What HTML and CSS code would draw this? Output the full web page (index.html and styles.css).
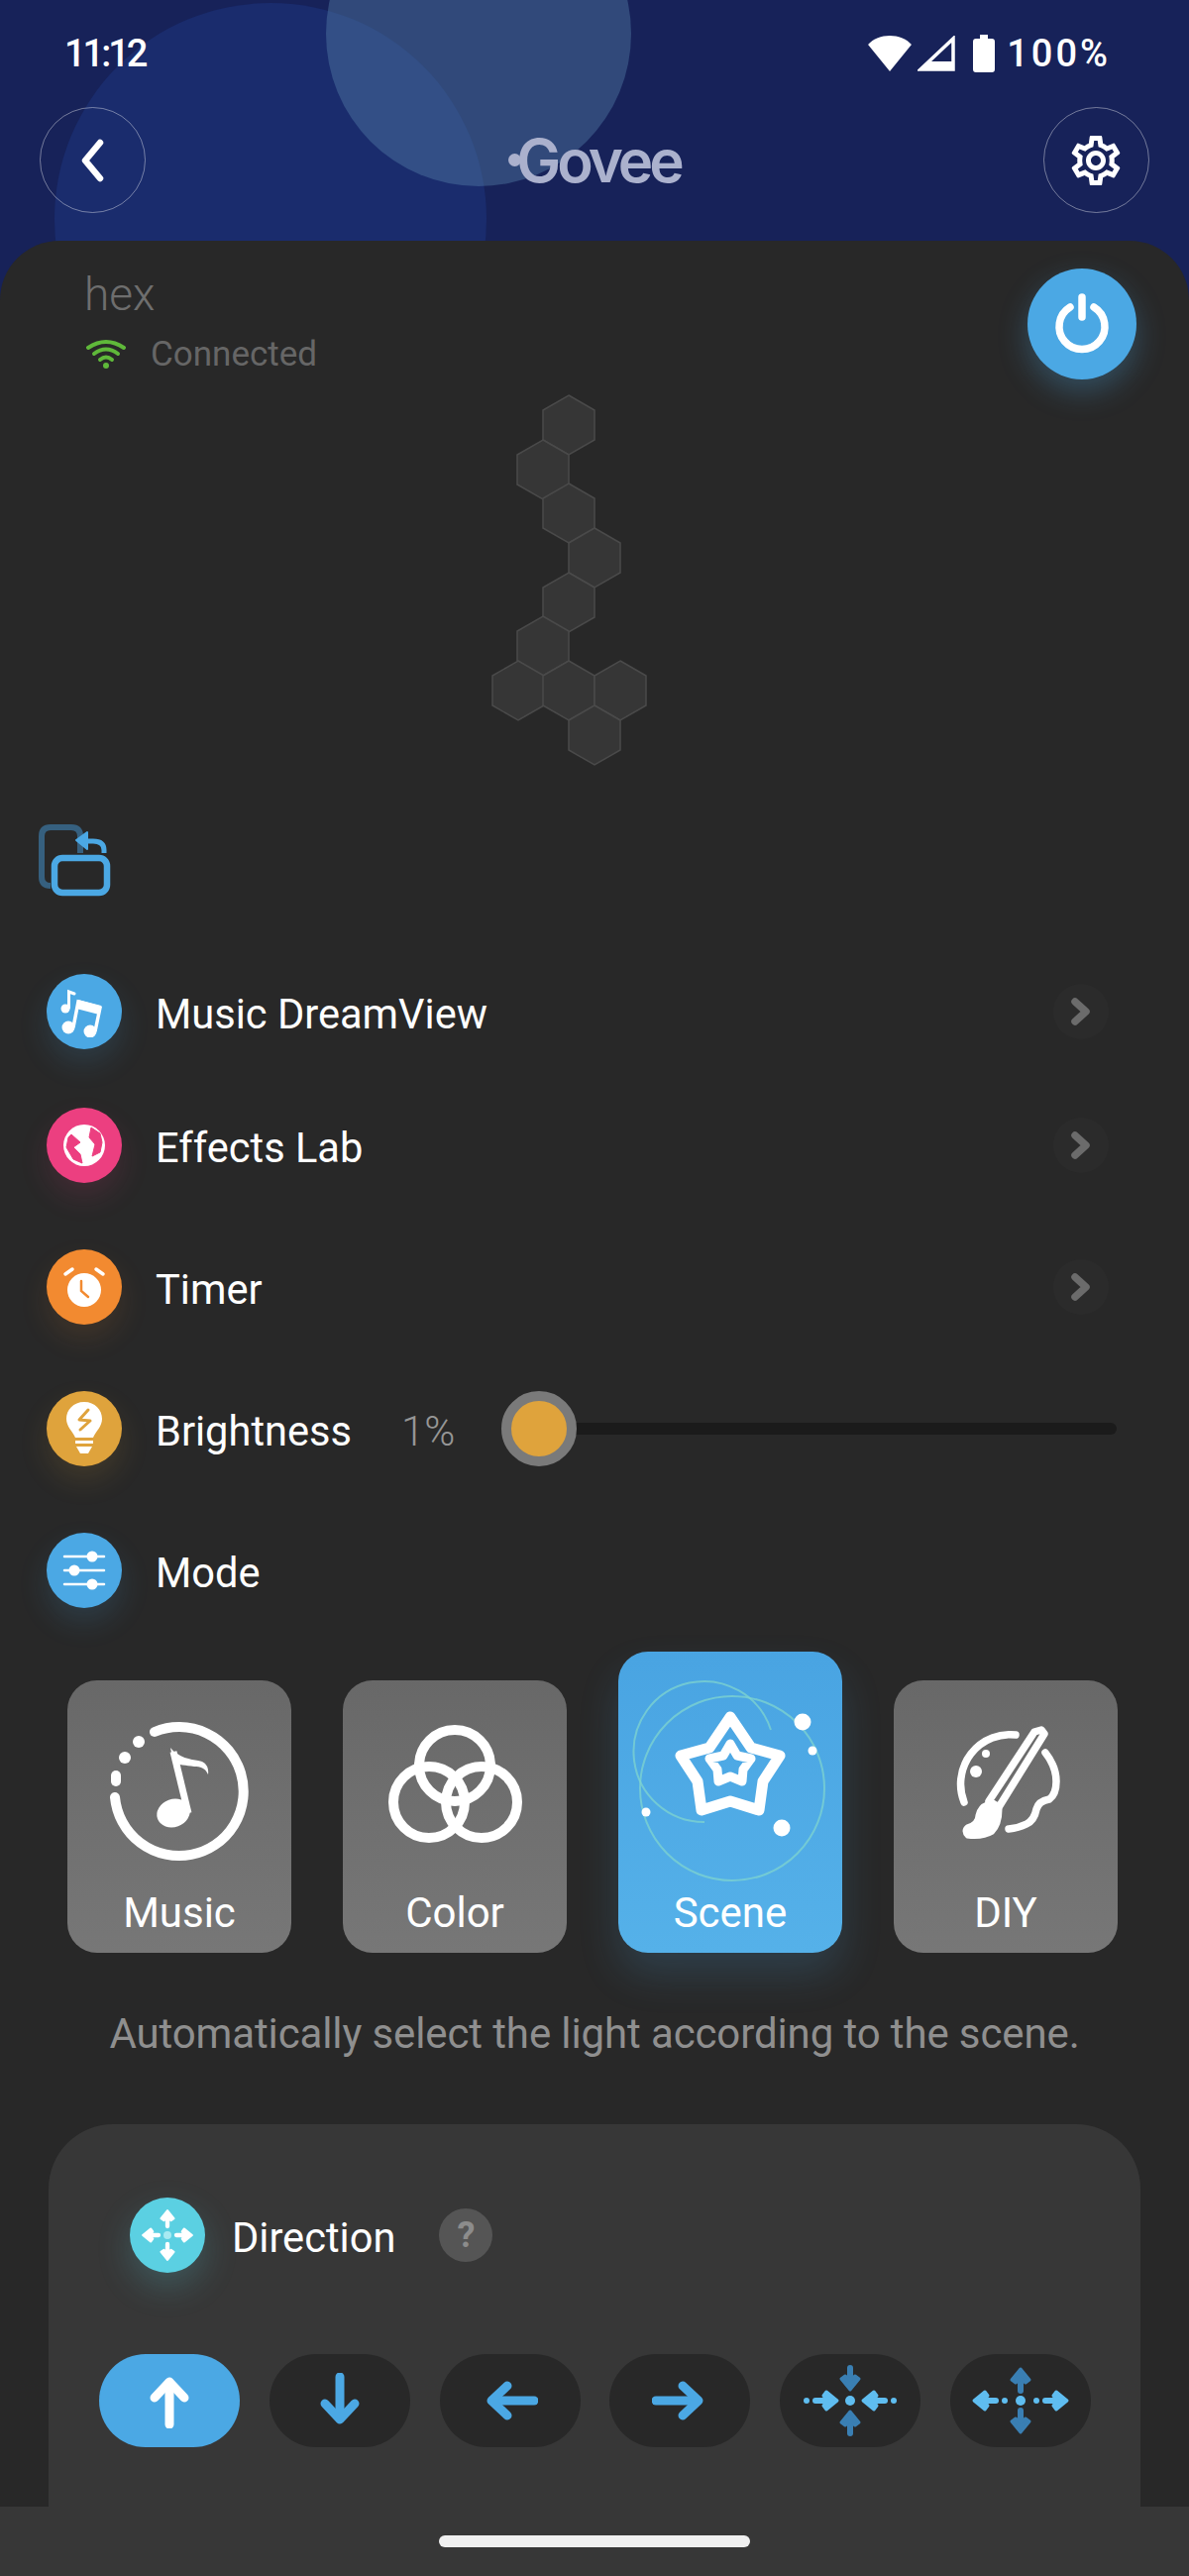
FILE: index.html

```html
<!DOCTYPE html>
<html>

<head>
    <meta charset="utf-8">
    <title>Govee hex</title>
    <link rel="stylesheet" href="styles.css">
</head>

<body>
<svg class="defs" width="0" height="0">
    <defs>
        <!-- short arrow, points right from 0,0 -->
        <g id="arw">
            <path d="M0 0H15" fill="none" stroke="currentColor" stroke-width="6" stroke-linecap="round"/>
            <path d="M11 -9L22 0L11 9L8 5L12 0L8 -5Z" fill="currentColor" stroke="currentColor" stroke-width="3" stroke-linejoin="round"/>
        </g>
        <g id="arwBig">
            <path d="M0 24V-18" fill="none" stroke="currentColor" stroke-width="9" stroke-linecap="round"/>
            <path d="M-15 -3L0 -19L15 -3" fill="none" stroke="currentColor" stroke-width="9" stroke-linecap="round" stroke-linejoin="round"/>
        </g>
    </defs>
</svg>

<div class="page">
    <div class="top">
        <div class="blob blob1"></div>
        <div class="blob blob2"></div>

        <div class="status">
            <span class="time">11:12</span>
            <div class="status-right">
                <svg width="46" height="36" viewBox="0 0 44 36" preserveAspectRatio="none"><path d="M22 36L1 9C6 3 14 0 22 0S38 3 43 9Z" fill="#fff"/></svg>
                <svg width="38" height="36" viewBox="0 0 38 36"><path d="M36 3V34H3Z" fill="none" stroke="#fff" stroke-width="3.5"/><path d="M3 34H36V26H11Z" fill="#fff"/></svg>
                <svg class="batt" width="22" height="38" viewBox="0 0 22 38"><path d="M7 0H15V4H19Q22 4 22 7V35Q22 38 19 38H3Q0 38 0 35V7Q0 4 3 4H7Z" fill="#fff"/></svg>
                <span class="pct">100%</span>
            </div>
        </div>

        <div class="topbar">
            <div class="round-btn">
                <svg width="28" height="44" viewBox="0 0 28 44"><path d="M21 4L6 22L21 40" fill="none" stroke="#fff" stroke-width="6.5" stroke-linecap="round" stroke-linejoin="round"/></svg>
            </div>
            <div class="logo"><span class="logo-dot"></span>Govee</div>
            <div class="round-btn">
                <svg width="60" height="60" viewBox="0 0 24 24"><path fill="#fff" d="M19.43 12.98c.04-.32.07-.64.07-.98 0-.34-.03-.66-.07-.98l2.11-1.65c.19-.15.24-.42.12-.64l-2-3.46c-.09-.16-.26-.25-.44-.25-.06 0-.12.01-.17.03l-2.49 1c-.52-.4-1.08-.73-1.69-.98l-.38-2.65C14.46 2.18 14.25 2 14 2h-4c-.25 0-.46.18-.49.42l-.38 2.65c-.61.25-1.17.59-1.69.98l-2.49-1c-.06-.02-.12-.03-.18-.03-.17 0-.34.09-.43.25l-2 3.46c-.13.22-.07.49.12.64l2.11 1.65c-.04.32-.07.65-.07.98 0 .33.03.66.07.98l-2.11 1.65c-.19.15-.24.42-.12.64l2 3.46c.09.16.26.25.44.25.06 0 .12-.01.17-.03l2.49-1c.52.4 1.08.73 1.69.98l.38 2.65c.03.24.24.42.49.42h4c.25 0 .46-.18.49-.42l.38-2.65c.61-.25 1.17-.59 1.69-.98l2.49 1c.06.02.12.03.18.03.17 0 .34-.09.43-.25l2-3.46c.12-.22.07-.49-.12-.64l-2.11-1.65zM17.45 11.27c.04.31.05.52.05.73 0 .21-.02.43-.05.73l-.14 1.13.89.7 1.08.84-.7 1.21-1.27-.51-1.04-.42-.9.68c-.43.32-.84.56-1.25.73l-1.06.43-.16 1.13-.2 1.35h-1.4l-.19-1.35-.16-1.13-1.06-.43c-.43-.18-.83-.41-1.23-.71l-.91-.7-1.06.43-1.27.51-.7-1.21 1.08-.84.89-.7-.14-1.13c-.03-.31-.05-.54-.05-.74s.02-.43.05-.73l.14-1.13-.89-.7-1.08-.84.7-1.21 1.27.51 1.04.42.9-.68c.43-.32.84-.56 1.25-.73l1.06-.43.16-1.13.2-1.35h1.39l.19 1.35.16 1.13 1.06.43c.43.18.83.41 1.23.71l.91.7 1.06-.43 1.27-.51.7 1.21-1.07.85-.89.7.14 1.13zM12 8c-2.21 0-4 1.79-4 4s1.79 4 4 4 4-1.79 4-4-1.79-4-4-4zm0 6c-1.1 0-2-.9-2-2s.9-2 2-2 2 .9 2 2-.9 2-2 2z"/></svg>
            </div>
        </div>
    </div>

    <div class="sheet">
        <div class="power">
            <svg width="62" height="62" viewBox="0 0 62 62"><path d="M19 14A23 23 0 1 0 43 14" fill="none" stroke="#fff" stroke-width="7.5" stroke-linecap="round"/><path d="M31 4V24" fill="none" stroke="#fff" stroke-width="7.5" stroke-linecap="round"/></svg>
        </div>

        <div class="device">
            <div class="dev-name">hex</div>
            <div class="dev-status">
                <svg width="42" height="30" viewBox="0 0 42 30">
                    <g fill="none" stroke="#5fb83a" stroke-width="4" stroke-linecap="round">
                        <path d="M3 9Q21 -3 39 9"/>
                        <path d="M9 15Q21 6 33 15"/>
                        <path d="M15 21Q21 16 27 21"/>
                    </g>
                    <circle cx="21" cy="27" r="3" fill="#5fb83a"/>
                </svg>
                <span>Connected</span>
            </div>

            <svg class="hexes" width="160" height="376" viewBox="496 398 160 376">
                <g fill="#363636" stroke="#4a4a4a" stroke-width="1.5">
                    <polygon points="574,399 600,414 600,444 574,459 548,444 548,414"/>
                    <polygon points="548,444 574,459 574,489 548,504 522,489 522,459"/>
                    <polygon points="574,488 600,503 600,533 574,548 548,533 548,503"/>
                    <polygon points="600,533 626,548 626,578 600,593 574,578 574,548"/>
                    <polygon points="574,578 600,593 600,623 574,638 548,623 548,593"/>
                    <polygon points="548,622 574,637 574,667 548,682 522,667 522,637"/>
                    <polygon points="523,667 549,682 549,712 523,727 497,712 497,682"/>
                    <polygon points="574,667 600,682 600,712 574,727 548,712 548,682"/>
                    <polygon points="626,667 652,682 652,712 626,727 600,712 600,682"/>
                    <polygon points="600,712 626,727 626,757 600,772 574,757 574,727"/>
                </g>
            </svg>

            <svg class="rotate" width="74" height="74" viewBox="0 0 74 74">
                <path d="M12 62Q3 62 3 53V12Q3 3 12 3H33Q42 3 42 12V29" fill="none" stroke="#36607f" stroke-width="6"/>
                <rect x="16" y="34" width="53" height="35" rx="8" fill="none" stroke="#4ba8e4" stroke-width="6.5"/>
                <path d="M66 29V26Q66 17 55 17H50" fill="none" stroke="#4ba8e4" stroke-width="5"/>
                <path d="M49 8V25L38 16Z" fill="#4ba8e4" stroke="#4ba8e4" stroke-width="2" stroke-linejoin="round"/>
            </svg>
        </div>

        <div class="row row-first">
            <div class="ico ico-blue">
                <svg width="52" height="52" viewBox="0 0 52 52">
                    <circle cx="7" cy="23" r="4.5" fill="#fff"/>
                    <path d="M10.500 22V6L16 8" fill="none" stroke="#fff" stroke-width="3" stroke-linecap="round"/>
                    <circle cx="10" cy="42" r="6.500" fill="#fff"/>
                    <circle cx="32" cy="46" r="6.500" fill="#fff"/>
                    <path d="M15 42L20 16L42 22L37 46" fill="none" stroke="#fff" stroke-width="3.500"/>
                    <path d="M20 14L43 20L41 29L18 23Z" fill="#fff"/>
                </svg>
            </div>
            <span class="row-label">Music DreamView</span>
            <span class="more"><svg width="22" height="30" viewBox="0 0 22 30"><path d="M5 5L16 15L5 25" fill="none" stroke="#6b6b6b" stroke-width="7.500" stroke-linecap="round" stroke-linejoin="round"/></svg></span>
        </div>

        <div class="row">
            <div class="ico ico-pink">
                <svg width="44" height="44" viewBox="0 0 44 44">
                    <circle cx="22" cy="22" r="21" fill="#fff"/>
                    <path d="M6 14L4 24L11 36L20 40L18 31L11 24L18 19L9 11Z" fill="#ec3f80" stroke="#ec3f80" stroke-linejoin="round"/>
                    <path d="M29 4L27 14L33 21L30 33L38 29L40 19L38 10Z" fill="#ec3f80" stroke="#ec3f80" stroke-linejoin="round"/>
                </svg>
            </div>
            <span class="row-label">Effects Lab</span>
            <span class="more"><svg width="22" height="30" viewBox="0 0 22 30"><path d="M5 5L16 15L5 25" fill="none" stroke="#6b6b6b" stroke-width="7.500" stroke-linecap="round" stroke-linejoin="round"/></svg></span>
        </div>

        <div class="row">
            <div class="ico ico-orange">
                <svg width="44" height="44" viewBox="0 0 44 44">
                    <circle cx="22" cy="25" r="17" fill="#fff"/>
                    <path d="M19 16V26L26 32" fill="none" stroke="#f28a30" stroke-width="2.500" stroke-linecap="round"/>
                    <path d="M3 9L10 4M41 9L34 4" fill="none" stroke="#fff" stroke-width="3.500" stroke-linecap="round"/>
                </svg>
            </div>
            <span class="row-label">Timer</span>
            <span class="more"><svg width="22" height="30" viewBox="0 0 22 30"><path d="M5 5L16 15L5 25" fill="none" stroke="#6b6b6b" stroke-width="7.500" stroke-linecap="round" stroke-linejoin="round"/></svg></span>
        </div>

        <div class="row">
            <div class="ico ico-gold">
                <svg width="44" height="56" viewBox="0 0 44 56">
                    <path d="M22 1C11 1 4 9 4 18C4 26 10 30 13 37H31C34 30 40 26 40 18C40 9 33 1 22 1Z" fill="#fff"/>
                    <path d="M26 9L17 19L28 20L18 29" fill="none" stroke="#dfa33c" stroke-width="3" stroke-linecap="round" stroke-linejoin="round"/>
                    <path d="M13 40H31V43H13Z" fill="#fff"/>
                    <path d="M14 46H30L26 53H18Z" fill="#fff"/>
                </svg>
            </div>
            <span class="row-label">Brightness</span>
            <span class="bright-val">1%</span>
            <div class="slider">
                <div class="track"></div>
                <div class="knob"></div>
            </div>
        </div>

        <div class="row">
            <div class="ico ico-blue">
                <svg width="44" height="40" viewBox="0 0 44 40">
                    <path d="M2 6H42M2 20H42M2 34H42" stroke="#fff" stroke-width="2.500" stroke-linecap="round"/>
                    <circle cx="30" cy="6" r="5.500" fill="#fff"/>
                    <circle cx="12" cy="20" r="5.500" fill="#fff"/>
                    <circle cx="30" cy="34" r="5.500" fill="#fff"/>
                </svg>
            </div>
            <span class="row-label">Mode</span>
        </div>

        <div class="modes">
            <div class="mode">
                <svg width="226" height="190" viewBox="0 0 226 190">
                    <g fill="none" stroke="#fff" stroke-width="10" stroke-linecap="round">
                        <path d="M88 52A65 65 0 1 1 48 118"/>
                        <path d="M49 96L49 102"/>
                    </g>
                    <circle cx="72" cy="62" r="6" fill="#fff"/>
                    <circle cx="58" cy="78" r="6" fill="#fff"/>
                    <ellipse cx="107" cy="134" rx="17" ry="14" fill="#fff" transform="rotate(-20 107 134)"/>
                    <path d="M107 72L122 134" stroke="#fff" stroke-width="7"/>
                    <path d="M104 68C112 78 125 80 132 81C140 82 143 88 142 95C139 88 134 87 128 87C120 86 112 85 107 83Z" fill="#fff"/>
                </svg>
                <span class="mode-name">Music</span>
            </div>
            <div class="mode">
                <svg width="226" height="190" viewBox="0 0 226 190">
                    <g fill="none" stroke="#fff" stroke-width="10">
                        <circle cx="113" cy="86" r="36"/>
                        <circle cx="87" cy="123" r="36"/>
                        <circle cx="140" cy="123" r="36"/>
                    </g>
                </svg>
                <span class="mode-name">Color</span>
            </div>
            <div class="mode mode-on">
                <svg width="226" height="236" viewBox="0 0 226 236">
                    <g fill="none" stroke="#7fd4cf" stroke-opacity=".75" stroke-width="2">
                        <circle cx="115" cy="138" r="93"/>
                        <path d="M154 79A71 71 0 1 0 87 172"/>
                    </g>
                    <path d="M113 66L134 97L163 105L146 131L142 160L113 151L84 160L80 131L63 105L92 97Z" fill="none" stroke="#fff" stroke-width="11" stroke-linejoin="round"/>
                    <path d="M113 93L120 105L134 108L126 119L125 131L113 126L101 131L100 119L92 108L106 105Z" fill="none" stroke="#fff" stroke-width="9" stroke-linejoin="round"/>
                    <circle cx="186" cy="71" r="8.500" fill="#fff"/>
                    <circle cx="196" cy="100" r="4.500" fill="#fff"/>
                    <circle cx="28" cy="162" r="4.500" fill="#fff"/>
                    <circle cx="165" cy="178" r="8.500" fill="#fff"/>
                </svg>
                <span class="mode-name">Scene</span>
            </div>
            <div class="mode">
                <svg width="226" height="190" viewBox="0 0 226 190">
                    <g fill="none" stroke="#fff" stroke-width="7.500" stroke-linecap="round" stroke-linejoin="round">
                        <path d="M123 55A50 50 0 0 0 71 123"/>
                        <path d="M153 73Q164 87 164 102Q164 115 157 120Q146 122 144 130Q142 141 134 145Q126 149 116 150"/>
                        <path d="M149 50L142 52L96 122L106 128L152 54Z"/>
                    </g>
                    <path d="M94 124L108 130Q108 146 100 154Q90 160 74 158Q68 152 74 147Q84 144 84 136Q86 127 94 124Z" fill="#fff" stroke="#fff" stroke-width="3" stroke-linejoin="round"/>
                    <circle cx="93" cy="74" r="4" fill="#fff"/>
                    <circle cx="83" cy="92" r="6" fill="#fff"/>
                </svg>
                <span class="mode-name">DIY</span>
            </div>
        </div>

        <p class="desc">Automatically select the light according to the scene.</p>

        <div class="panel">
            <div class="panel-head">
                <div class="ico ico-cyan">
                    <svg width="56" height="56" viewBox="-28 -28 56 56" class="ico-arrows">
                        <use href="#arw" transform="translate(9 0) scale(.72)"/>
                        <use href="#arw" transform="rotate(90) translate(9 0) scale(.72)"/>
                        <use href="#arw" transform="rotate(180) translate(9 0) scale(.72)"/>
                        <use href="#arw" transform="rotate(270) translate(9 0) scale(.72)"/>
                        <circle r="4" fill="#a8eaf2"/>
                    </svg>
                </div>
                <span class="row-label">Direction</span>
                <span class="help">?</span>
            </div>
            <div class="dirs">
                <div class="dir dir-on">
                    <svg width="48" height="56" viewBox="-24 -28 48 56"><use href="#arwBig"/></svg>
                </div>
                <div class="dir">
                    <svg width="48" height="56" viewBox="-24 -28 48 56"><use href="#arwBig" transform="rotate(180)"/></svg>
                </div>
                <div class="dir">
                    <svg width="56" height="48" viewBox="-28 -24 56 48"><use href="#arwBig" transform="rotate(270)"/></svg>
                </div>
                <div class="dir">
                    <svg width="56" height="48" viewBox="-28 -24 56 48"><use href="#arwBig" transform="rotate(90)"/></svg>
                </div>
                <div class="dir">
                    <svg width="104" height="72" viewBox="-52 -36 104 72">
                        <g class="dim">
                            <use href="#arw" transform="rotate(90) translate(-33 0)"/>
                            <use href="#arw" transform="rotate(270) translate(-33 0)"/>
                        </g>
                        <g class="lit">
                            <use href="#arw" transform="translate(-35 0)"/>
                            <use href="#arw" transform="rotate(180) translate(-35 0)"/>
                            <circle r="5"/><circle cx="-44" r="3"/><circle cx="44" r="3"/>
                        </g>
                    </svg>
                </div>
                <div class="dir">
                    <svg width="104" height="72" viewBox="-52 -36 104 72">
                        <g class="dim">
                            <use href="#arw" transform="rotate(90) translate(10 0)"/>
                            <use href="#arw" transform="rotate(270) translate(10 0)"/>
                        </g>
                        <g class="lit">
                            <use href="#arw" transform="translate(25 0)"/>
                            <use href="#arw" transform="rotate(180) translate(25 0)"/>
                            <circle r="5"/><circle cx="-16" r="3"/><circle cx="16" r="3"/>
                        </g>
                    </svg>
                </div>
            </div>
        </div>
    </div>

    <div class="navbar"><div class="pill"></div></div>
</div>
</body>

</html>
```

FILE: styles.css

```css
* {
    margin: 0px;
    padding: 0px;
    box-sizing: border-box;
}
body {
    background: #172259;
    font-family: Roboto, "Liberation Sans", sans-serif;
    color: #fff;
}
svg {
    display: block;
}
.defs {
    position: absolute;
}
.page {
    width: 1200px;
    height: 2600px;
    overflow: hidden;
    display: flex;
    flex-direction: column;
}

/* top blue area */
.top {
    height: 243px;
    flex-shrink: 0;
    position: relative;
    padding: 0 40px;
}
.blob {
    position: absolute;
    border-radius: 50%;
}
.blob1 {
    left: 55px;
    top: 3px;
    width: 436px;
    height: 436px;
    background: #1a2c6d;
}
.blob2 {
    left: 329px;
    top: -120px;
    width: 308px;
    height: 308px;
    background: rgba(86, 128, 170, 0.42);
}
.status {
    position: relative;
    height: 108px;
    display: flex;
    justify-content: space-between;
    align-items: center;
    padding: 0 39px 0 25px;
}
.time {
    font-size: 38px;
    font-weight: 500;
    letter-spacing: -3px;
}
.status-right {
    display: flex;
    align-items: center;
    gap: 5px;
}
.batt {
    margin-left: 13px;
}
.pct {
    font-size: 38px;
    font-weight: 500;
    letter-spacing: 3px;
    margin-left: 7px;
}
.topbar {
    position: relative;
    display: flex;
    justify-content: space-between;
    align-items: center;
}
.round-btn {
    width: 107px;
    height: 107px;
    border: 1.5px solid rgba(255, 255, 255, 0.4);
    border-radius: 50%;
    display: flex;
    align-items: center;
    justify-content: center;
}
.logo {
    display: flex;
    align-items: center;
    font-family: Inter, "Liberation Sans", sans-serif;
    font-size: 60px;
    font-weight: 600;
    line-height: 60px;
    letter-spacing: -4px;
    color: #abb1cd;
}
.logo-dot {
    width: 13px;
    height: 13px;
    margin-right: -5px;
    border-radius: 50%;
    background: #abb1cd;
}

/* dark sheet */
.sheet {
    flex: 1;
    min-height: 0;
    position: relative;
    overflow: hidden;
    background: #282828;
    border-radius: 60px 60px 0 0;
}
.power {
    position: absolute;
    top: 28px;
    right: 53px;
    width: 110px;
    height: 112px;
    border-radius: 50%;
    background: #4ba8e4;
    box-shadow: 0 12px 30px rgba(75, 168, 228, 0.3);
    display: flex;
    align-items: center;
    justify-content: center;
}
.device {
    height: 740px;
    padding-top: 30px;
}
.dev-name {
    padding-left: 85px;
    font-size: 46px;
    font-weight: 300;
    line-height: 48px;
    color: #6e6e6e;
}
.dev-status {
    margin-top: 16px;
    padding-left: 86px;
    height: 40px;
    display: flex;
    align-items: center;
    gap: 24px;
    font-size: 35px;
    color: #666;
}
.hexes {
    margin: 21px 0 0 496px;
}
.rotate {
    margin: 58px 0 0 39px;
}

/* rows */
.row {
    height: 76px;
    margin-bottom: 67px;
    padding-left: 47px;
    display: flex;
    align-items: center;
}
.row-first {
    margin-bottom: 59px;
}
.ico {
    width: 76px;
    height: 76px;
    flex-shrink: 0;
    border-radius: 50%;
    display: flex;
    align-items: center;
    justify-content: center;
}
.ico-blue {
    background: #4ba8e4;
    box-shadow: 0 14px 30px rgba(75, 168, 228, 0.16);
}
.ico-pink {
    background: #ec3f80;
    box-shadow: 0 14px 30px rgba(236, 63, 128, 0.14);
}
.ico-orange {
    background: #f28a30;
    box-shadow: 0 14px 30px rgba(242, 138, 48, 0.12);
}
.ico-gold {
    background: #dfa33c;
    box-shadow: 0 14px 30px rgba(223, 163, 60, 0.14);
}
.ico-cyan {
    background: #5bd0e2;
    box-shadow: 0 14px 34px rgba(91, 208, 226, 0.22);
}
.ico-arrows {
    color: #fff;
}
.row-label {
    margin-left: 34px;
    padding-top: 5px;
    font-size: 41.6px;
    line-height: 48px;
    color: #fff;
}
.more {
    margin-left: auto;
    margin-right: 81px;
    width: 56px;
    height: 56px;
    border-radius: 50%;
    background: #2b2b2b;
    display: flex;
    align-items: center;
    justify-content: center;
}
.bright-val {
    margin-left: 50px;
    padding-top: 5px;
    width: 101px;
    font-size: 42px;
    font-weight: 300;
    color: #969696;
}
.slider {
    flex: 1;
    height: 76px;
    margin-right: 73px;
    position: relative;
    display: flex;
    align-items: center;
}
.track {
    width: 100%;
    height: 12px;
    border-radius: 6px;
    background: #1b1b1b;
}
.knob {
    position: absolute;
    left: 0;
    top: 0;
    width: 76px;
    height: 76px;
    border: 10px solid #7a7a7a;
    border-radius: 50%;
    background: #dfa33c;
}

/* mode cards */
.modes {
    margin-top: -23px;
    padding-left: 68px;
    display: flex;
    align-items: flex-end;
    gap: 52px;
}
.mode {
    width: 226px;
    height: 275px;
    border-radius: 30px;
    background: linear-gradient(#686868, #777);
    display: flex;
    flex-direction: column;
    align-items: center;
    padding-bottom: 16px;
}
.mode-on {
    height: 304px;
    background: linear-gradient(#49a4e2, #55b1e9);
    box-shadow: 0 22px 40px rgba(75, 168, 228, 0.18);
}
.mode-name {
    margin-top: auto;
    font-size: 42px;
    line-height: 48px;
}
.desc {
    margin-top: 54px;
    font-size: 42px;
    letter-spacing: -0.12px;
    line-height: 56px;
    text-align: center;
    color: #8f8f8f;
}

/* direction */
.panel {
    margin: 63px 49px 0;
    height: 600px;
    padding: 74px 50px 0 51px;
    border-radius: 65px;
    background: #373737;
}
.panel-head {
    padding-left: 31px;
    display: flex;
    align-items: center;
}
.panel-head .row-label {
    margin-left: 27px;
}
.help {
    margin-left: 44px;
    width: 54px;
    height: 54px;
    border-radius: 50%;
    background: #555;
    color: #8c8c8c;
    font-size: 36px;
    font-weight: 700;
    text-align: center;
    line-height: 54px;
}
.dirs {
    margin-top: 82px;
    display: flex;
    justify-content: space-between;
}
.dir {
    width: 142px;
    height: 94px;
    border-radius: 47px;
    background: #282828;
    color: #4ba8e4;
    display: flex;
    align-items: center;
    justify-content: center;
}
.dir-on {
    background: #4ba8e4;
    color: #fff;
}
.dim {
    color: #3a7fb3;
}
.lit {
    color: #5fbdf0;
    fill: #5fbdf0;
}

.navbar {
    height: 70px;
    flex-shrink: 0;
    background: #373737;
    display: flex;
    justify-content: center;
    padding-top: 29px;
}
.pill {
    width: 314px;
    height: 12px;
    border-radius: 6px;
    background: #f0f0f0;
}
```
